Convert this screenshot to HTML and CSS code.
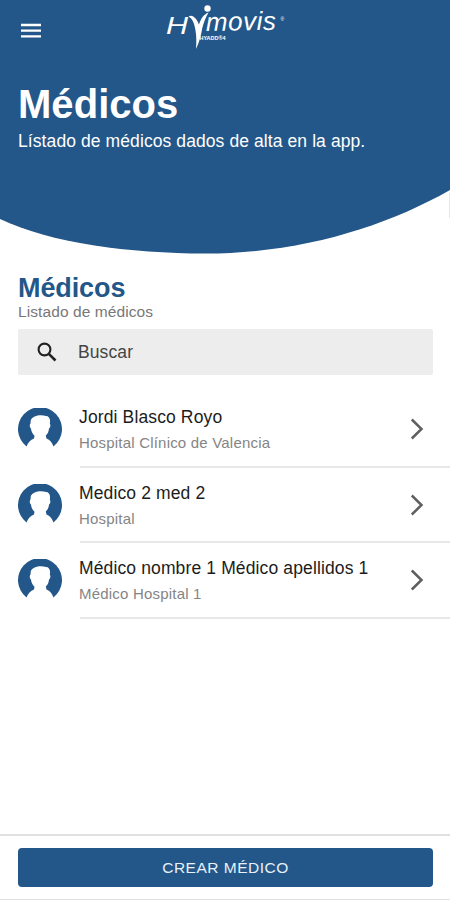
FILE: index.html
```html
<!DOCTYPE html>
<html lang="es">
<head>
<meta charset="utf-8">
<title>Médicos</title>
<link rel="stylesheet" href="styles.css">
</head>
<body>
<svg class="defs" aria-hidden="true">
  <symbol id="avatar" viewBox="0 0 44 44">
    <path fill="#235789" d="M8.500 38.500A22 22 0 1 1 35.500 38.500C34 34.500 32 32 28.500 30.500L27.800 27.500C30 25.500 30.800 23 31 20.500C32.500 19.500 32.800 17 31.800 15.500C32.800 11 31 8 28 8C22 6 14.500 8 12.800 12L12.500 15.500C11.300 17 11.600 19.500 13 20.500C13.300 23.500 14.500 26 16.500 27.800L16 30.500C12.500 32 10 34.500 8.500 38.500Z"/>
  </symbol>
  <symbol id="chevron" viewBox="0 0 14 24">
    <path fill="none" stroke="#606060" stroke-width="2.500" d="M1.800 2.500L11.500 12L1.800 21.500"/>
  </symbol>
</svg>
<div class="screen">
  <header class="hero">
    <svg class="curve" viewBox="0 0 450 256"><path fill="#235789" d="M0 0H450V190C385 227 300 253.500 205 253.500C130 253.500 50 243 0 219Z"/><path stroke="#e4e6ea" d="M449.500 193V218"/></svg>
    <div class="bar">
      <svg class="menu" viewBox="0 0 20 16"><path stroke="#fff" stroke-width="2.300" d="M0 2H20M0 7.700H20M0 13.400H20"/></svg>
      <svg class="logo" viewBox="0 0 140 52" fill="#fff">
        <text class="script" x="11" y="34" textLength="22" lengthAdjust="spacingAndGlyphs" font-size="24">H</text>
        <circle cx="52.500" cy="8.500" r="3.200"/>
        <path d="M33.500 16.500C37.500 13.500 42 19 44 24.500C46 18.500 48.500 14.500 53.500 12.500C50.500 18 48.500 23 47.200 28.500C46 36 44 43 41 49C41.500 42 41.500 36 40.500 30.500C39.500 23.500 37.500 18.500 33.500 16.500Z"/>
        <text class="script" x="51" y="31" textLength="70" font-size="26" transform="rotate(-1 51 30)">movis</text>
        <text class="tiny" x="44.500" y="39.800" textLength="26" lengthAdjust="spacingAndGlyphs">HYADD®4</text>
        <text class="reg" x="125.500" y="21">®</text>
      </svg>
    </div>
    <h1>Médicos</h1>
    <p class="lead">Lístado de médicos dados de alta en la app.</p>
  </header>
  <main>
    <h2>Médicos</h2>
    <p class="sub">Listado de médicos</p>
    <div class="search">
      <svg class="glass" viewBox="0 0 20 20" fill="none" stroke="#222"><circle cx="7.500" cy="7.500" r="5.900" stroke-width="2.100"/><path stroke-width="2.600" d="M11.800 11.800L18.500 18.500"/></svg>
      <span>Buscar</span>
    </div>
    <ul class="list">
      <li><svg class="avatar"><use href="#avatar"/></svg><div class="item"><div><div class="name">Jordi Blasco Royo</div><div class="place">Hospital Clínico de Valencia</div></div><svg class="chevron"><use href="#chevron"/></svg></div></li>
      <li><svg class="avatar"><use href="#avatar"/></svg><div class="item"><div><div class="name">Medico 2 med 2</div><div class="place">Hospital</div></div><svg class="chevron"><use href="#chevron"/></svg></div></li>
      <li><svg class="avatar"><use href="#avatar"/></svg><div class="item"><div><div class="name">Médico nombre 1 Médico apellidos 1</div><div class="place">Médico Hospital 1</div></div><svg class="chevron"><use href="#chevron"/></svg></div></li>
    </ul>
  </main>
  <footer><button class="create">CREAR MÉDICO</button></footer>
</div>
</body>
</html>
```
FILE: styles.css
```css
* { box-sizing: border-box; }
body, h1, h2, p, ul { margin: 0; padding: 0; }
body { background: #fff; font-family: "Liberation Sans", Arial, sans-serif; }
svg { display: block; flex: none; }
.defs { position: absolute; width: 0; height: 0; }
.screen { display: flex; flex-direction: column; width: 450px; height: 900px; overflow: hidden; }

.hero { position: relative; height: 256px; color: #fff; }
.curve { position: absolute; inset: 0; width: 450px; height: 256px; z-index: -1; }
.bar { display: flex; height: 80px; padding-left: 21px; }
.menu { width: 20px; height: 16px; margin-top: 23px; }
.logo { width: 140px; height: 52px; margin-left: 114px; }
.script { font-family: "Liberation Sans", sans-serif; font-style: italic; }
.tiny { font-size: 5.5px; font-weight: bold; }
.reg { font-size: 5px; }
h1 { padding-left: 18px; font-size: 40px; line-height: 48px; letter-spacing: .05px; }
.lead { padding-left: 18px; margin-top: 3px; font-size: 17.5px; line-height: 20px; letter-spacing: .09px; }

main { flex: 1; padding-top: 16px; }
h2 { padding-left: 18px; color: #235789; font-size: 27px; line-height: 32px; letter-spacing: -.1px; }
.sub { padding-left: 18px; color: #777; font-size: 15.5px; line-height: 16px; letter-spacing: .09px; }
.search { display: flex; align-items: center; width: 415px; height: 46px; margin: 9px 0 0 18px; padding-left: 19px; border-radius: 2px; background: #ededed; color: #444; font-size: 17.5px; letter-spacing: .1px; }
.glass { width: 20px; height: 20px; margin-right: 21px; }
.list { margin-top: 17px; list-style: none; }
.list li { display: flex; height: 75.5px; padding-left: 18px; }
.avatar { width: 44px; height: 44px; margin: 16px 18px 0 0; }
.item { display: flex; flex: 1; justify-content: space-between; padding: 13px 26px 0 0; border-bottom: 2px solid #e8e8e8; }
.name { margin-left: -1px; color: #1c1c1c; font-size: 17.5px; line-height: 24px; letter-spacing: .13px; }
.place { margin-left: -1px; margin-top: 3px; color: #858585; font-size: 15px; line-height: 22px; letter-spacing: .2px; }
.chevron { width: 14px; height: 24px; margin-top: 12px; }

footer { height: 66px; padding: 12px 17px 0 18px; border-top: 2px solid #e0e0e0; border-bottom: 1px solid #e0e0e0; }
.create { display: block; width: 415px; height: 39px; padding: 0; border: 0; border-radius: 4px; background: #235789; color: #e8f0fa; font: 15.5px "Liberation Sans", Arial, sans-serif; letter-spacing: .5px; }
```
